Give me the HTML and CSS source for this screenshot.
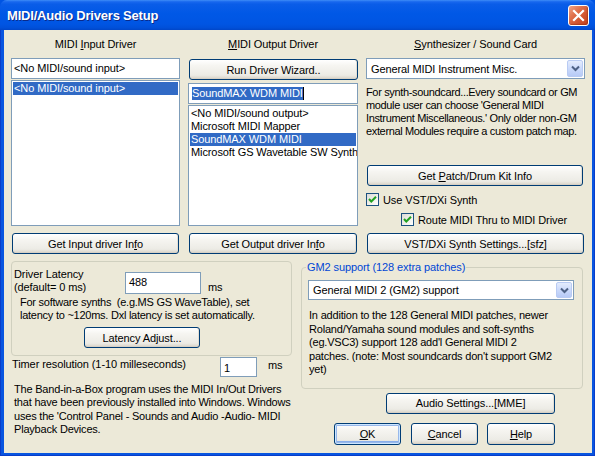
FILE: index.html
```html
<!DOCTYPE html>
<html>
<head>
<meta charset="utf-8">
<title>MIDI/Audio Drivers Setup</title>
<link rel="stylesheet" href="styles.css">
</head>
<body>
<div class="window">
  <div class="titlebar">
    <span class="title">MIDI/Audio Drivers Setup</span>
    <span class="close"><svg width="13" height="13" viewBox="0 0 13 13"><path d="M2 2 L11 11 M11 2 L2 11" stroke="#fff" stroke-width="2.2" stroke-linecap="square"/></svg></span>
  </div>
  <div class="frame">
    <div class="client">
      <div class="top">
        <div class="hdr">MIDI <u>I</u>nput Driver</div>
        <div class="hdr"><u>M</u>IDI Output Driver</div>
        <div class="hdr"><u>S</u>ynthesizer / Sound Card</div>

        <div class="col col-in">
          <div class="edit in-edit">&lt;No MIDI/sound input&gt;</div>
          <div class="listbox in-list">
            <div class="item sel">&lt;No MIDI/sound input&gt;</div>
          </div>
        </div>

        <div class="col col-out">
          <button class="btn wizard">Run Driver Wizard..</button>
          <div class="edit out-edit"><span class="seltext">SoundMAX WDM MIDI</span><span class="caret"></span></div>
          <div class="listbox out-list">
            <div class="item">&lt;No MIDI/sound output&gt;</div>
            <div class="item">Microsoft MIDI Mapper</div>
            <div class="item sel">SoundMAX WDM MIDI</div>
            <div class="item">Microsoft GS Wavetable SW Synth</div>
          </div>
        </div>

        <div class="col col-syn">
          <div class="combo synth-combo">
            <span class="combo-text">General MIDI Instrument Misc.</span>
            <span class="drop"><svg width="9" height="7" viewBox="0 0 9 7"><path d="M1 1.5 L4.5 5 L8 1.5" fill="none" stroke="#4D6185" stroke-width="2"/></svg></span>
          </div>
          <p class="desc">For synth-soundcard...Every soundcard or GM<br>module user can choose 'General MIDI<br>Instrument Miscellaneous.' Only older non-GM<br>external Modules require a custom patch map.</p>
          <button class="btn patch">Get <u>P</u>atch/Drum Kit Info</button>
          <div class="check">
            <span class="box"><svg width="13" height="13" viewBox="0 0 13 13"><path d="M3 6 L5.3 8.5 L10 3.8" fill="none" stroke="#21A121" stroke-width="2"/></svg></span>
            <span>Use VST/DXi Synth</span>
          </div>
          <div class="check route">
            <span class="box"><svg width="13" height="13" viewBox="0 0 13 13"><path d="M3 6 L5.3 8.5 L10 3.8" fill="none" stroke="#21A121" stroke-width="2"/></svg></span>
            <span>Route MIDI Thru to MIDI Driver</span>
          </div>
        </div>

        <button class="btn rowbtn">Get Input driver In<u>f</u>o</button>
        <button class="btn rowbtn">Get Output driver In<u>f</u>o</button>
        <button class="btn rowbtn">VST/DXi Synth Settings...[sfz]</button>
      </div>

      <div class="bottom">
        <div class="bl">
          <div class="group latency">
            <div class="lat-row">
              <div class="lat-label">Driver Latency<br>(default= 0 ms)</div>
              <div class="edit lat-edit">488</div>
              <span class="lat-ms">ms</span>
            </div>
            <p class="lat-note">For software synths&nbsp; (e.g.MS GS WaveTable), set<br>latency to ~120ms. Dxl latency is set automatically.</p>
            <button class="btn lat-btn">Latency Adjust...</button>
          </div>
          <div class="timer">
            <span class="timer-label">Timer resolution (1-10 milleseconds)</span>
            <div class="edit timer-edit">1</div>
            <span class="timer-ms">ms</span>
          </div>
          <p class="note">The Band-in-a-Box program uses the MIDI In/Out Drivers<br>that have been previously installed into Windows. Windows<br>uses the 'Control Panel - Sounds and Audio -Audio- MIDI<br>Playback Devices.</p>
        </div>

        <div class="br">
          <fieldset class="gm2">
            <legend>GM2 support (128 extra patches)</legend>
            <div class="combo gm2-combo">
              <span class="combo-text">General MIDI 2 (GM2) support</span>
              <span class="drop"><svg width="9" height="7" viewBox="0 0 9 7"><path d="M1 1.5 L4.5 5 L8 1.5" fill="none" stroke="#4D6185" stroke-width="2"/></svg></span>
            </div>
            <p class="gm2-text">In addition to the 128 General MIDI patches, newer<br>Roland/Yamaha sound modules and soft-synths<br>(eg.VSC3) support 128 add'l General MIDI 2<br>patches. (note: Most soundcards don't support GM2<br>yet)</p>
          </fieldset>
          <div class="audio-row">
            <button class="btn audio">Audio Settings...[MME]</button>
          </div>
          <div class="actions">
            <button class="btn ok"><u>O</u>K</button>
            <button class="btn cancel"><u>C</u>ancel</button>
            <button class="btn help"><u>H</u>elp</button>
          </div>
        </div>
      </div>
    </div>
  </div>
</div>
</body>
</html>
```

FILE: styles.css
```css
* { box-sizing: border-box; }
html, body { margin: 0; padding: 0; }
body {
  width: 595px;
  height: 456px;
  overflow: hidden;
  background: #0054E3;
  font-family: "Liberation Sans", Arial, sans-serif;
  font-size: 11px;
  letter-spacing: -0.1px;
  color: #000;
}
p { margin: 0; }
u { text-decoration: underline; text-underline-offset: 1px; }

.window {
  width: 595px;
  height: 456px;
  display: flex;
  flex-direction: column;
}

.titlebar {
  height: 30px;
  flex: none;
  display: flex;
  align-items: center;
  padding: 0 6px 0 7px;
  background: linear-gradient(to bottom, #3E8DF7 0%, #1868EE 6%, #0A5DE8 14%, #0058E6 45%, #0055E3 80%, #0050DA 92%, #0046C8 100%);
  border-radius: 7px 7px 0 0;
}
.title {
  flex: 1;
  color: #fff;
  font-weight: bold;
  font-size: 13px;
  letter-spacing: -0.2px;
  text-shadow: 1px 1px 0 #0A2A8A;
  padding-top: 1px;
}
.close {
  width: 21px;
  height: 21px;
  display: flex;
  align-items: center;
  justify-content: center;
  border: 1px solid #fff;
  border-radius: 3px;
  background: linear-gradient(135deg, #EFA488 0%, #E0714C 35%, #D05530 65%, #C2401C 100%);
  box-shadow: inset -1px -1px 1px rgba(120,30,0,0.35);
}

.frame {
  flex: 1;
  display: flex;
  padding: 0 5px 3px 4px;
  background: #0855E0;
  box-shadow: inset 1px 0 #0A3DC9, inset -1px 0 #0A3DC9, inset 0 -1px #0A3DC9;
}
.client {
  flex: 1;
  background: #ECE9D8;
  padding: 8px 7px 0 7px;
}

/* ---------- top section ---------- */
.top {
  display: grid;
  grid-template-columns: 169px 170px 219px;
  column-gap: 8px;
}
.hdr {
  text-align: center;
  line-height: 13px;
  height: 13px;
}
.col { display: flex; flex-direction: column; }

.edit {
  background: #fff;
  border: 1px solid #7F9DB9;
  white-space: nowrap;
  overflow: hidden;
}
.listbox {
  background: #fff;
  border: 1px solid #7F9DB9;
  padding: 1px;
  overflow: hidden;
  white-space: nowrap;
}
.item {
  height: 13px;
  line-height: 13px;
  padding-left: 1px;
}
.item.sel { background: #316AC5; color: #fff; }

.col-in .in-edit {
  margin-top: 7px;
  height: 21px;
  line-height: 19px;
  padding-left: 2px;
}
.col-in .in-list {
  margin-top: 1px;
  height: 146px;
}

.btn {
  font-family: "Liberation Sans", Arial, sans-serif;
  font-size: 11px;
  letter-spacing: -0.1px;
  color: #000;
  height: 21px;
  padding: 0;
  border: 1px solid #003C74;
  border-radius: 3px;
  background: linear-gradient(to bottom, #FFFFFF 0%, #F6F5F1 30%, #ECEBE5 80%, #D8D2C6 100%);
  box-shadow: inset 0 -1px 0 #D6D0C5, inset -1px 0 0 #E3DFD4;
  text-align: center;
  white-space: nowrap;
}

.col-out .wizard { margin-top: 8px; height: 21px; width: 169px; margin-left: 1px; }
.col-out .out-edit {
  margin-top: 3px;
  height: 21px;
  padding: 3px 0 0 3px;
  line-height: 13px;
}
.seltext { background: #316AC5; color: #fff; display: inline-block; height: 13px; }
.caret { display: inline-block; width: 1px; height: 13px; background: #000; vertical-align: top; }
.col-out .out-list {
  margin-top: 1px;
  height: 121px;
}

.combo {
  background: #fff;
  border: 1px solid #7F9DB9;
  display: flex;
  align-items: center;
  justify-content: space-between;
  padding: 1px;
}
.combo-text { padding-left: 3px; white-space: nowrap; }
.drop {
  width: 16px;
  height: 100%;
  display: flex;
  align-items: center;
  justify-content: center;
  border: 1px solid #B9CBF3;
  border-radius: 2px;
  background: linear-gradient(to bottom, #E4ECFD 0%, #CBDAFB 50%, #B7CAF6 100%);
}
.synth-combo { margin-top: 7px; height: 21px; }

.desc {
  margin-top: 7px;
  line-height: 13px;
  white-space: nowrap;
  letter-spacing: -0.35px;
}
.patch { margin-top: 27px; width: 216px; margin-left: 1px; }
.check {
  display: flex;
  align-items: center;
  height: 13px;
  margin-top: 7px;
  white-space: nowrap;
}
.check .box {
  width: 13px;
  height: 13px;
  border: 1px solid #1C5180;
  background: linear-gradient(135deg, #DCDCD7 0%, #F2F1EC 60%, #FFFFFF 100%);
  margin-right: 4px;
  flex: none;
}
.check .box svg { display: block; margin: -1px 0 0 -1px; }
.check.route { padding-left: 35px; }

.rowbtn {
  margin-top: 7px;
  margin-left: 1px;
  width: calc(100% - 2px);
}

/* ---------- bottom section ---------- */
.bottom {
  display: grid;
  grid-template-columns: 281px 282px;
  column-gap: 9px;
  margin-top: 7px;
}
.group {
  border: 1px solid #D0D0BF;
  border-radius: 4px;
}
.latency {
  height: 95px;
  padding: 6px 0 0 2px;
}
.lat-row { display: flex; align-items: flex-start; }
.lat-label { width: 111px; line-height: 13px; }
.lat-edit {
  margin-top: 4px;
  width: 76px;
  height: 22px;
  padding: 2px 0 0 3px;
  line-height: 14px;
}
.lat-ms { margin: 13px 0 0 7px; line-height: 13px; }
.lat-note {
  margin: 2px 0 0 6px;
  line-height: 13px;
  white-space: nowrap;
  letter-spacing: -0.25px;
}
.lat-btn {
  display: block;
  margin: 5px 0 0 70px;
  width: 116px;
  height: 21px;
}

.timer {
  display: flex;
  align-items: center;
  margin-top: 1px;
  height: 20px;
}
.timer-label { width: 209px; padding-left: 1px; white-space: nowrap; margin-top: -6px; }
.timer-edit {
  width: 37px;
  height: 20px;
  padding: 3px 0 0 3px;
  line-height: 14px;
}
.timer-ms { margin-left: 11px; margin-top: -4px; }
.note {
  margin-top: 6px;
  padding-left: 3px;
  line-height: 13.3px;
  white-space: nowrap;
  letter-spacing: -0.2px;
}

.gm2 {
  margin: 0;
  min-width: 0;
  border: 1px solid #D0D0BF;
  border-radius: 4px;
  padding: 0 8px 11px 6px;
}
.gm2 legend {
  padding: 0 1px;
  margin-left: -2px;
  color: #0046D5;
  line-height: 13px;
}
.gm2-combo { margin-top: 6px; height: 20px; }
.gm2-text {
  margin-top: 9px;
  padding-left: 1px;
  line-height: 13.6px;
  white-space: nowrap;
  letter-spacing: -0.2px;
}

.audio-row {
  display: flex;
  justify-content: flex-end;
  padding-right: 28px;
  margin-top: 4px;
}
.audio { width: 169px; height: 21px; }

.actions {
  display: flex;
  justify-content: flex-end;
  padding-right: 28px;
  margin-top: 9px;
}
.actions .btn { height: 22px; }
.ok {
  width: 67px;
  margin-right: 10px;
  box-shadow: inset 0 0 0 1px #CEE7FF, inset 0 0 0 2px #98B8EA, inset 0 -2px 0 1px #89AFEA;
}
.cancel { width: 67px; margin-right: 9px; }
.help { width: 68px; }
```
